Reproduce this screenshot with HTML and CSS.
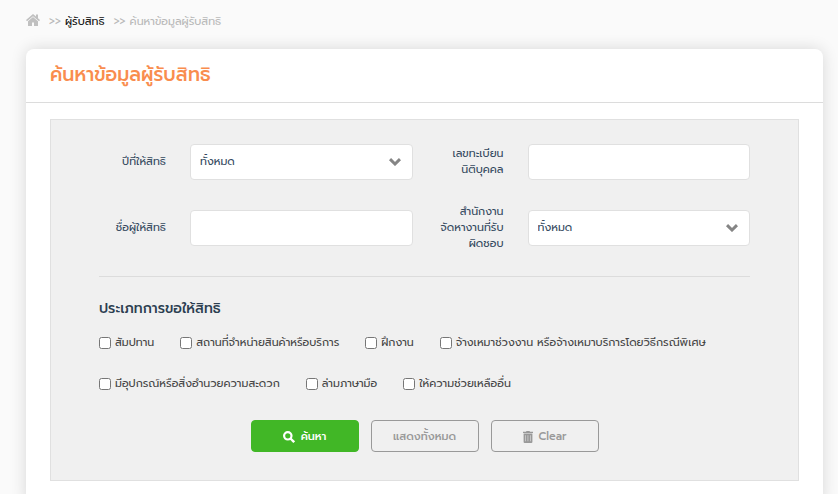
FILE: index.html
```html
<!DOCTYPE html>
<html lang="th">
<head>
<meta charset="utf-8">
<meta name="viewport" content="width=device-width, initial-scale=1">
<title>ค้นหาข้อมูลผู้รับสิทธิ</title>
<link rel="stylesheet" href="styles.css">
</head>
<body>
<nav class="breadcrumb">
  <a class="home" href="#" aria-label="home"><svg class="home-icon" viewBox="0 0 14 12"><path d="M7 0 0 6l1 1.300 6-5 6 5L14 6l-2-1.700V.5h-2v2z"/><path d="M7 3 2 7.200V12h4V8.500h2V12h4V7.200z"/></svg></a>
  <span class="sep">&gt;&gt;</span>
  <a class="crumb" href="#">ผู้รับสิทธิ</a>
  <span class="sep">&gt;&gt;</span>
  <span>ค้นหาข้อมูลผู้รับสิทธิ</span>
</nav>
<main class="card">
  <header class="card-header"><h1 class="title">ค้นหาข้อมูลผู้รับสิทธิ</h1></header>
  <form class="panel">
    <div class="fields">
      <label class="label" for="year">ปีที่ให้สิทธิ</label>
      <select class="control select" id="year"><option>ทั้งหมด</option></select>
      <label class="label" for="regno">เลขทะเบียน<br>นิติบุคคล</label>
      <input class="control" id="regno" type="text">
      <label class="label" for="name">ชื่อผู้ให้สิทธิ</label>
      <input class="control" id="name" type="text">
      <label class="label" for="office">สำนักงาน<br>จัดหางานที่รับ<br>ผิดชอบ</label>
      <select class="control select" id="office"><option>ทั้งหมด</option></select>
    </div>
    <fieldset class="types">
      <legend class="subtitle">ประเภทการขอให้สิทธิ</legend>
      <div class="checks">
        <label class="check"><input class="box" type="checkbox">สัมปทาน</label>
        <label class="check"><input class="box" type="checkbox">สถานที่จำหน่ายสินค้าหรือบริการ</label>
        <label class="check"><input class="box" type="checkbox">ฝึกงาน</label>
        <label class="check"><input class="box" type="checkbox">จ้างเหมาช่วงงาน หรือจ้างเหมาบริการโดยวิธีกรณีพิเศษ</label>
      </div>
      <div class="checks">
        <label class="check"><input class="box" type="checkbox">มีอุปกรณ์หรือสิ่งอำนวยความสะดวก</label>
        <label class="check"><input class="box" type="checkbox">ล่ามภาษามือ</label>
        <label class="check"><input class="box" type="checkbox">ให้ความช่วยเหลืออื่น</label>
      </div>
    </fieldset>
    <div class="actions">
      <button class="btn btn-primary" type="submit"><svg class="icon" viewBox="0 0 12 12"><circle cx="4.800" cy="4.800" r="3.700" fill="none" stroke="currentColor" stroke-width="2.200"/><path d="m7.500 7.500 3.700 3.700" stroke="currentColor" stroke-width="2.400"/></svg>ค้นหา</button>
      <button class="btn" type="button">แสดงทั้งหมด</button>
      <button class="btn" type="reset"><svg class="icon icon-trash" viewBox="0 0 10 12"><path fill="currentColor" fill-rule="evenodd" d="M0 .8h3L3.500 0h3L7 .8h3V2H0zM.6 2.600h8.800V11q0 1-1 1H1.600q-1 0-1-1zM2.500 4.300v6H3v-6zm2.200 0v6h.5v-6zm2.300 0v6h.5v-6z"/></svg>Clear</button>
    </div>
  </form>
</main>
</body>
</html>
```
FILE: styles.css
```css
* { box-sizing: border-box; }
body {
  margin: 0;
  padding: 13px 15px 0 26px;
  background: #fafafa;
  color: #34495e;
  font-family: Prompt, Kanit, "Noto Sans Thai", "Noto Sans", sans-serif;
  font-size: 11px;
  line-height: 16px;
  overflow: hidden;
}
.breadcrumb {
  display: flex;
  align-items: center;
  height: 18px;
  color: #b8b8b8;
  white-space: nowrap;
}
.home { display: flex; margin-right: 9px; }
.home-icon { width: 14px; height: 12px; margin-bottom: 4px; fill: #c0c0c0; }
.sep { margin-right: 4px; }
.crumb { margin-right: 9px; color: #111; text-decoration: none; }
.card {
  margin-top: 18px;
  padding-bottom: 24px;
  background: #fff;
  border-radius: 8px;
  box-shadow: 0 0 16px rgba(0, 0, 0, 0.14);
}
.card-header { padding: 11px 24px 12px; border-bottom: 1px solid #dcdcdc; }
.title { margin: 0; color: #f98d4e; font-size: 19px; font-weight: 500; line-height: 30px; }
.panel {
  margin: 16px 24px 0;
  padding: 24px 48px 28px;
  background: #f0f0f0;
  border: 1px solid #e0e0e0;
}
.fields {
  display: grid;
  grid-template-columns: 67px 1fr 67px 1fr;
  column-gap: 24px;
  row-gap: 24px;
  align-items: center;
  padding-bottom: 24px;
  border-bottom: 1px solid #dcdcdc;
}
.label { text-align: right; white-space: nowrap; }
.control {
  width: 100%;
  height: 36px;
  padding: 0 9px;
  background: #fff;
  border: 1px solid #e0e0e0;
  border-radius: 4px;
  color: inherit;
  font: inherit;
}
.select {
  appearance: none;
  background: #fff url("data:image/svg+xml,%3Csvg xmlns='http://www.w3.org/2000/svg' viewBox='0 0 12 8'%3E%3Cpath d='M1 1.200 6 6l5-4.800' fill='none' stroke='%23858585' stroke-width='3'/%3E%3C/svg%3E") no-repeat right 11px center / 12px 8px;
}
.types { min-width: 0; margin: 0; padding: 21px 0 0; border: 0; }
.subtitle { float: left; width: 100%; margin-bottom: 15px; padding: 0; color: #2c3e50; font-size: 14px; font-weight: 500; line-height: 22px; }
.checks { clear: both; display: flex; flex-wrap: wrap; gap: 8px 26px; margin-bottom: 25px; color: #444; }
.check { display: flex; align-items: center; gap: 4px; white-space: nowrap; }
.box { width: 12px; height: 12px; margin: 0; }
.actions { display: flex; justify-content: center; gap: 12px; padding-top: 3px; }
.btn {
  display: flex;
  align-items: center;
  justify-content: center;
  gap: 6px;
  width: 108px;
  height: 32px;
  padding: 1px 0 0;
  background: transparent;
  border: 1px solid #999;
  border-radius: 4px;
  color: #999;
  font: inherit;
  font-weight: 500;
}
.btn-primary { background: #41b726; border-color: #41b726; color: #fff; }
.icon { width: 12px; height: 12px; }
.icon-trash { width: 10px; }
```
